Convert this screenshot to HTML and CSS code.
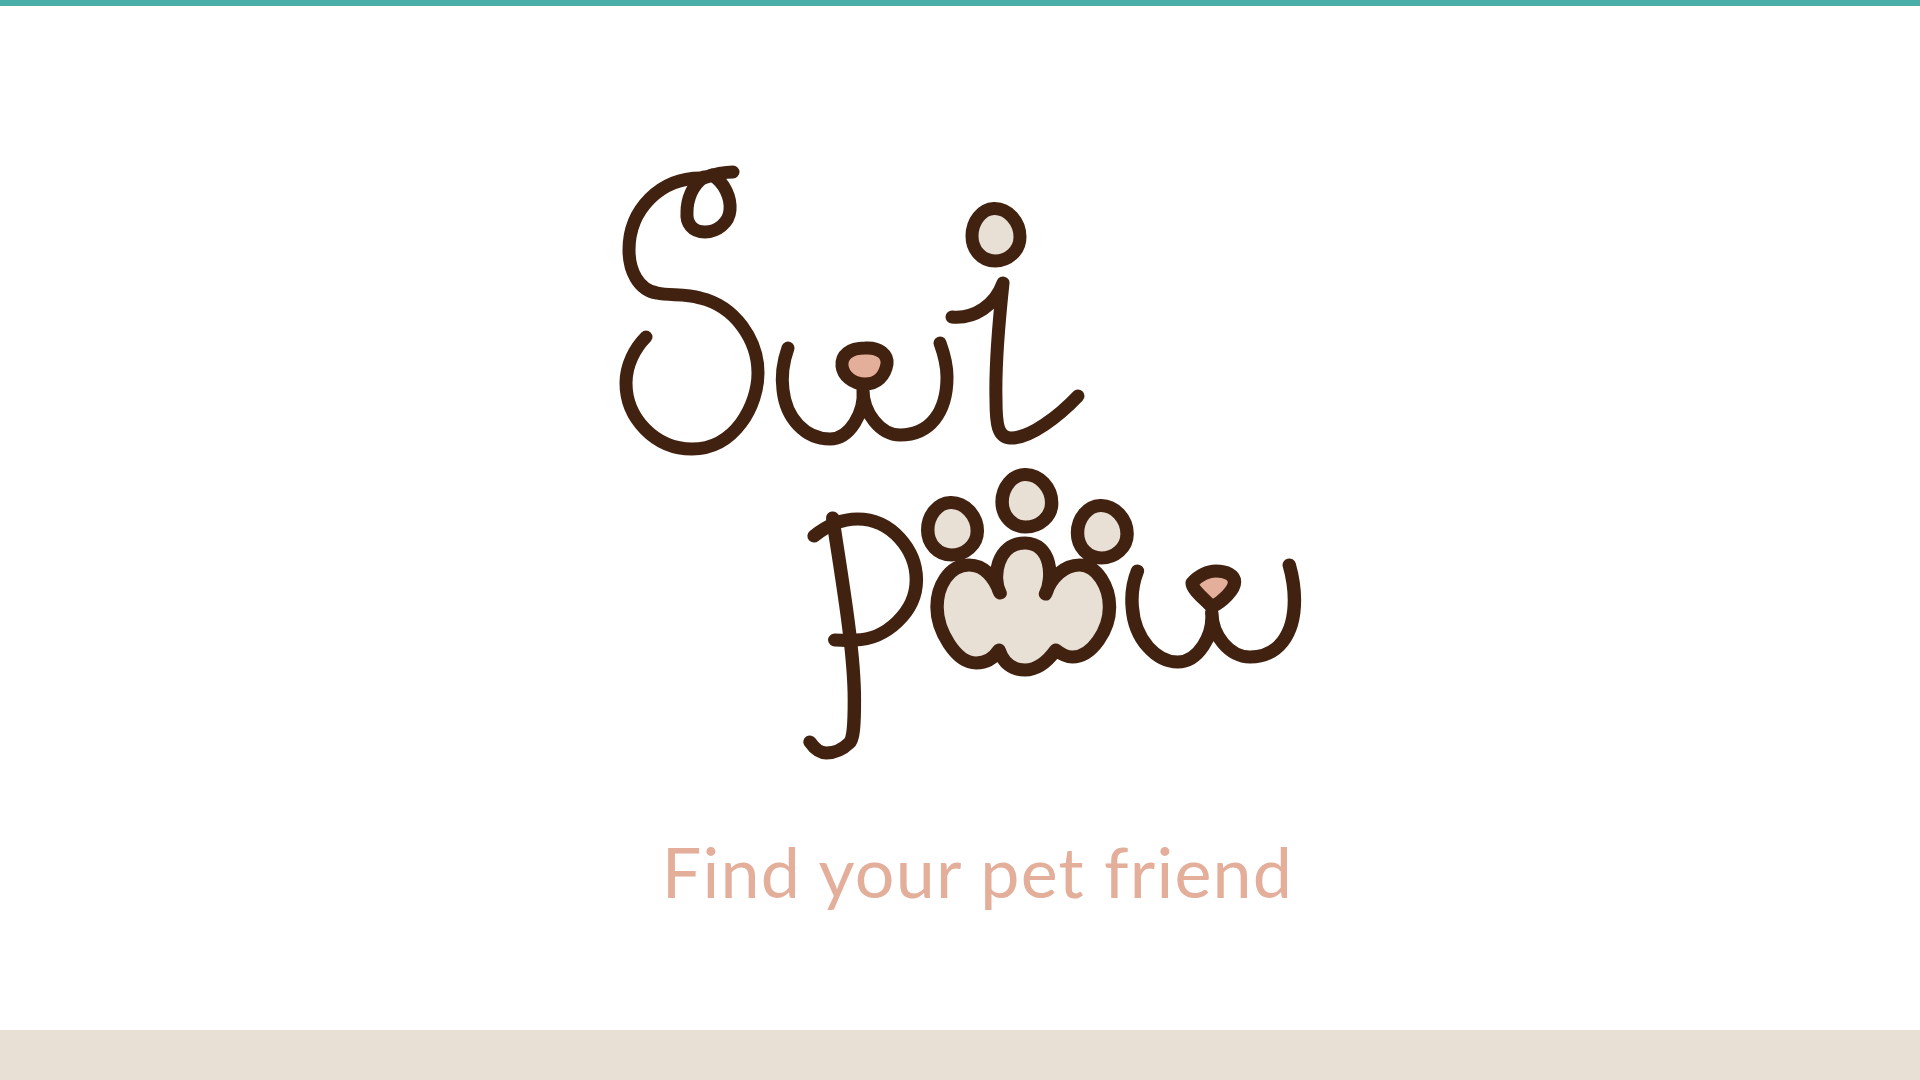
FILE: index.html
```html
<!DOCTYPE html>
<html lang="en">
<head>
    <meta charset="UTF-8">
    <meta name="viewport" content="width=device-width, initial-scale=1.0">
    <title>Swi Paw</title>
    <link rel="stylesheet" href="styles.css">
</head>
<body>
    <div class="top-bar"></div>
    <main class="splash">
        <svg class="logo" viewBox="0 0 720 630" role="img" aria-label="Swi Paw logo">
            <defs>
                <path id="toe" d="M-2 -26.5 C12 -27 24 -13 24 2 C24 16 12 26 -1 26 C-14 26 -24 15 -24 1 C-24 -14 -14 -26 -2 -26.5 Z"/>
            </defs>
            <!-- S -->
            <path class="line" d="M133 22 C122 22 112 25 103 28 C60 27 29 60 29 100 C29 120 38 140 57 143 C70 146 85 143 100 148 C135 156 158 190 158 223 C158 255 135 299 92 299 C55 299 26 268 26 233 C26 215 35 198 46 187"/>
            <path class="line" d="M112 25 C125 33 131 48 130 60 C129 73 117 82 105 82 C92 82 86 73 87 62 C87 50 92 35 104 27"/>
            <!-- w -->
            <path class="line" d="M188 198 C183 212 181 225 183 240 C186 268 205 289 230 289 C250 289 265 262 263 240 C263 262 280 285 300 285 C330 285 347 262 347 227 C347 215 344 204 340 193"/>
            <path class="line pink" d="M265 198 C280 197 288 205 287 214 C285 226 277 234 265 234 C252 234 243 225 242 216 C241 205 250 198 265 198 Z"/>
            <!-- i -->
            <path class="line" d="M352 167 C375 169 395 155 403 133 C398 180 395 215 396 250 C396 275 398 287 410 288 C430 289 460 265 478 246"/>
            <use class="line cream" href="#toe" x="396" y="85"/>
            <g class="paw-word" transform="translate(180 0) scale(1.033 1) translate(-180 0)">
                <!-- p -->
                <path class="line" d="M231 368 C240 430 252 500 252 550 C252 575 251 590 247 593 C240 600 232 603 225 603 C218 603 213 598 209 592"/>
                <path class="line" d="M213 386 C225 376 240 369 255 369 C288 369 312 400 312 430 C312 462 282 490 253 490 C245 491 240 490 233 490"/>
                <!-- paw -->
                <path class="line cream" d="M393 443 C388 428 378 415 363 415 C343 415 332 437 332 457 C332 480 350 513 370 513 C380 513 387 508 392 500 C396 513 405 520 417 520 C430 520 440 510 447 500 C452 504 457 507 463 507 C482 507 499 480 499 457 C499 437 487 415 470 415 C455 415 442 428 437 444 C445 428 443 393 417 393 C390 393 385 428 393 443 Z"/>
                <use class="line cream" href="#toe" x="347" y="379"/>
                <use class="line cream" href="#toe" x="419" y="351"/>
                <use class="line cream" href="#toe" x="492" y="382"/>
                <!-- w with nose -->
                <path class="line" d="M526 421 C521 434 520 445 521 457 C523 490 545 512 565 512 C585 512 600 485 598 463 C598 485 615 507 635 507 C662 507 678 485 678 450 C678 438 676 426 673 415"/>
                <path class="line pink" d="M579 433 C585 425 595 421 602 421 C612 421 620 425 620 432 C620 440 608 452 598 457 C592 450 579 440 579 433 Z"/>
            </g>
        </svg>
        <p class="tagline">Find your pet friend</p>
    </main>
    <div class="bottom-bar"></div>
</body>
</html>
```

FILE: styles.css
```css
* {
    box-sizing: border-box;
}

body {
    margin: 0;
    height: 1080px;
    display: flex;
    flex-direction: column;
    background-color: white;
    overflow: hidden;
}

.top-bar {
    height: 6px;
    background-color: #4aada8;
}

.bottom-bar {
    height: 50px;
    background-color: #e8e0d5;
}

.splash {
    flex: 1;
    display: flex;
    flex-direction: column;
    align-items: center;
    padding-top: 144px;
}

.logo {
    width: 720px;
    height: 630px;
    display: block;
}

.line {
    fill: none;
    stroke: #41210f;
    stroke-width: 13;
    stroke-linecap: round;
    stroke-linejoin: round;
}

.cream {
    fill: #e8e0d5;
}

.pink {
    fill: #e3ae9a;
}

.tagline {
    margin: 51px 0 0 35px;
    font-family: "Lato", sans-serif;
    font-size: 70px;
    line-height: 80px;
    letter-spacing: 1.2px;
    color: #e3ae9a;
}
```
